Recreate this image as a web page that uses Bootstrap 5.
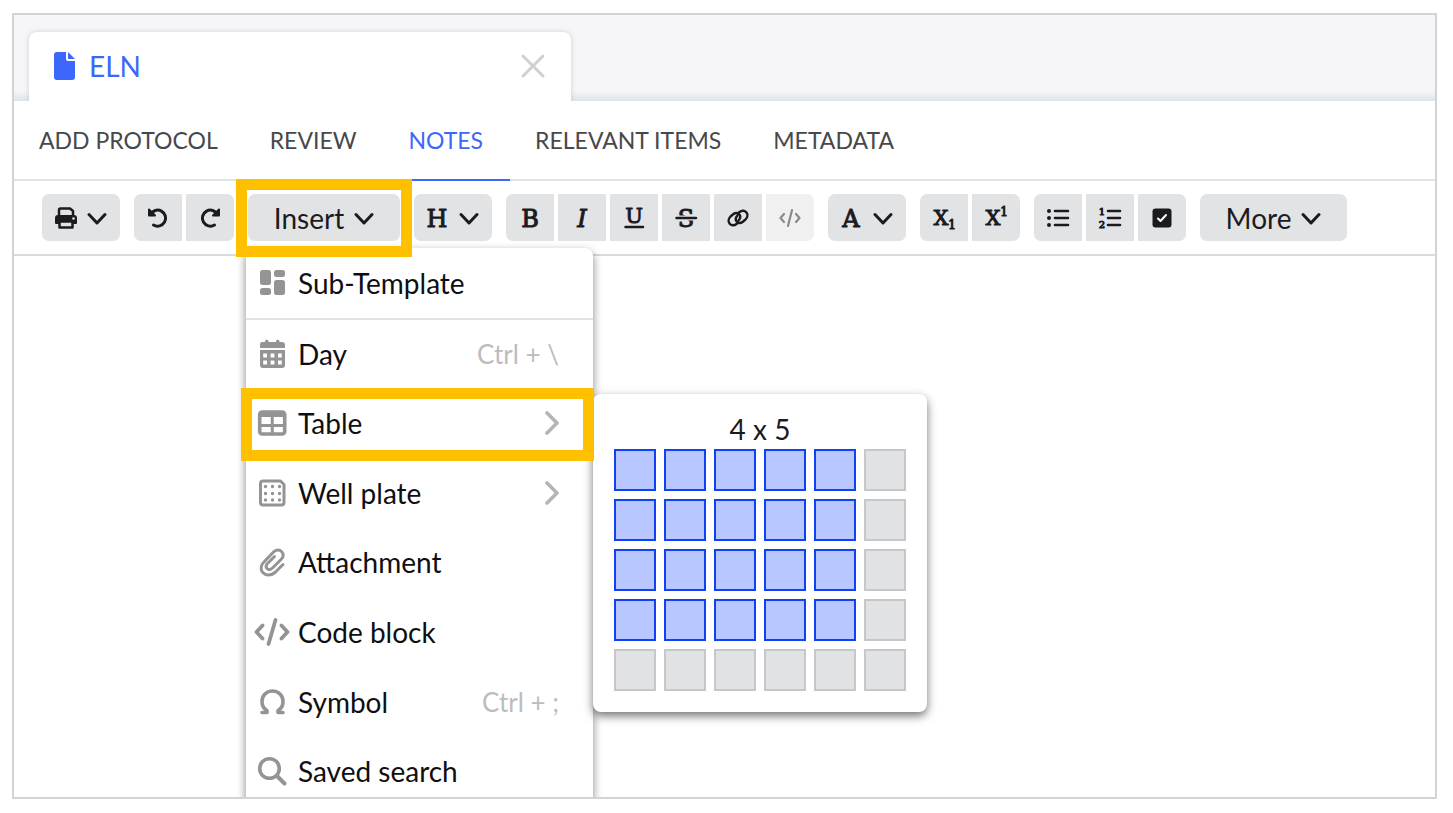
<!DOCTYPE html>
<html lang="en">
<head>
<meta charset="utf-8">
<meta name="viewport" content="width=device-width, initial-scale=1">
<title>ELN</title>
<link href="https://cdn.jsdelivr.net/npm/bootstrap@5.3.0/dist/css/bootstrap.min.css" rel="stylesheet">
<style>
  :root { --ink: #1b1b1f; --accent: #3d66fb; --mark: #ffc000; --key: #e2e3e5; }
  body { font-family: Lato, "Liberation Sans", sans-serif; color: var(--ink); background: #fff; }
  .app-frame { height: calc(100vh - 27px); margin: 13px 16px 14px 12px; border: 2px solid #d3d3d4; }
  .tab-strip { background: linear-gradient(#f6f6f9 0 88%, #dde4ea); padding: 17px 15px 0; height: 86px; }
  .doc-tab { width: 542px; padding: 0 25px 2px 24px; background: #fff; border-radius: 8px 8px 0 0; color: var(--accent); font-size: 28px; line-height: 40px; box-shadow: 0 0 5px rgba(60,60,70,.2); clip-path: inset(-8px -8px 0 -8px); }
  .doc-close, .doc-close:hover { color: #d0d0d2; }
  .view-nav { border-bottom: 2px solid #e1e2e4; }
  .view-nav .nav-link { padding: 19px 27px 19px 25px; font-size: 23px; line-height: 40px; color: #48484a; margin-bottom: -2px; border-bottom: 2px solid transparent; }
  .view-nav .nav-link.active { color: var(--accent); border-color: var(--accent); }
  .tool-row { gap: 14px; padding: 13px 28px; border-bottom: 2px solid #d9dbdf; }
  .tool-set { gap: 4px; }
  .tool { width: 48px; height: 47px; padding: 0; border: 0; border-radius: 0; background: var(--key); color: var(--ink); display: flex; align-items: center; justify-content: center; gap: 10px; font-size: 28px; line-height: 40px; }
  .tool:disabled { background: #f0f0f1; color: #8a8a8c; opacity: 1; }
  .tool-set > .tool:first-child { border-top-left-radius: 7px; border-bottom-left-radius: 7px; }
  .tool-set > .tool:last-of-type { border-top-right-radius: 7px; border-bottom-right-radius: 7px; }
  .tool-pick { width: 78px; }
  .tool-insert { width: 152px; }
  .tool-more { width: 147px; }
  svg { flex: none; fill: none; stroke: currentColor; stroke-width: 3; stroke-linecap: round; stroke-linejoin: round; overflow: visible; }
  svg text { font-family: "DejaVu Serif", serif; font-size: 24px; fill: currentColor; stroke-width: 1; text-anchor: middle; }
  svg .letter-x { font-size: 21px; }
  svg .letter-u { font-size: 21px; }
  svg .script-digit { font-size: 12px; }
  svg .list-digit { font-size: 10px; }
  .marked::after { content: ""; position: absolute; border: 11px solid var(--mark); pointer-events: none; z-index: 30; }
  .insert-box::after { inset: -15px -12px -16px; }
  .insert-menu { position: absolute; z-index: 10; top: 54px; left: -2px; width: 347px; background: #fff; border-radius: 8px; font-size: 28px; line-height: 40px; box-shadow: 0 4px 8px 1px rgba(0,0,0,.4); }
  .entry { width: 100%; height: 100%; border: 0; background: none; color: #0f0f12; padding: 0 34px 2px 8px; display: flex; align-items: center; gap: 8px; text-align: left; }
  .entry svg { color: #949496; }
  .entry-end { margin-left: auto; color: #bcbcbe; font-size: 26px; }
  .entry svg.entry-end { color: #b4b4b6; }
  .entry-first { height: 72px; border-bottom: 2px solid #e1e2e4; }
  .entry-first .entry { padding-bottom: 0; }
  .entry-grid { display: grid; grid-auto-rows: 1fr; height: 487px; }
  .table-row-item::after { inset: -2px -1px -2px -5px; }
  .size-panel { position: absolute; z-index: 20; top: 4px; left: 100%; padding: 15px 21px 21px; background: #fff; border-radius: 8px; box-shadow: 0 4px 10px rgba(0,0,0,.55); text-align: center; }
  .size-grid { display: grid; grid-template-columns: repeat(6, 42px); gap: 8px; }
  .cell { width: 42px; height: 42px; padding: 0; background: #e1e2e4; border: 2px solid #c6c7ca; }
  .cell.on { background: #b8c7ff; border-color: #0f42f5; }
</style>
</head>
<body>
<svg width="0" height="0" class="position-absolute" aria-hidden="true">
  <symbol id="chev" viewBox="0 0 20 14"><path d="M2 3.500 10 12 18 3.500"/></symbol>
  <symbol id="next" viewBox="0 0 16 26"><path stroke-width="3.600" d="M4 3 14 13 4 23"/></symbol>
</svg>
<main class="app-frame overflow-hidden">
  <div class="tab-strip d-flex">
    <div class="doc-tab d-flex align-items-center">
      <svg width="24" height="30" viewBox="0 0 24 30" aria-hidden="true"><path fill="currentColor" stroke="none" d="M4 1H13V8Q13 10 15 10H22V26Q22 29 19 29H4Q1 29 1 26V4Q1 1 4 1Z"/><path fill="currentColor" stroke="none" d="M15 1 22 8H15Z"/></svg>
      <span class="ms-2 ps-1">ELN</span>
      <button type="button" class="btn doc-close p-0 border-0 ms-auto d-flex" aria-label="Close tab"><svg width="26" height="26" viewBox="0 0 26 26"><path d="M3 3 23 23M23 3 3 23"/></svg></button>
    </div>
  </div>
  <nav class="view-nav nav flex-nowrap text-nowrap">
    <a class="nav-link" href="#protocol">ADD PROTOCOL</a>
    <a class="nav-link" href="#review">REVIEW</a>
    <a class="nav-link active" href="#notes" aria-current="page">NOTES</a>
    <a class="nav-link" href="#items">RELEVANT ITEMS</a>
    <a class="nav-link" href="#metadata">METADATA</a>
  </nav>
  <div class="tool-row d-flex" role="toolbar" aria-label="Editor tools">
    <div class="tool-set d-flex">
      <button type="button" class="btn tool tool-pick" aria-label="Print">
        <svg width="22" height="22" viewBox="0 0 22 22"><path stroke-width="2.500" d="M4 8V3Q4 1.500 5.500 1.500H15L18 4V8"/><path fill="currentColor" stroke="none" d="M3 8H19Q22 8 22 11V16Q22 17 21 17H1Q0 17 0 16V11Q0 8 3 8Z"/><path fill="#e2e3e5" stroke-width="2.500" d="M4.500 14.500H17.500V20.500H4.500Z"/><circle cx="18.500" cy="11.500" r="1.300" fill="#e2e3e5" stroke="none"/></svg>
        <svg width="20" height="14"><use href="#chev"/></svg>
      </button>
    </div>
    <div class="tool-set d-flex">
      <button type="button" class="btn tool" aria-label="Undo"><svg width="22" height="22" viewBox="0 0 22 22"><path d="M3.500 7.500A8 8 0 1 1 6.500 18"/><path fill="currentColor" stroke-width="2" d="M2 2.500V8.500H8Z"/></svg></button>
      <button type="button" class="btn tool" aria-label="Redo"><svg width="22" height="22" viewBox="0 0 22 22"><path d="M18.500 7.500A8 8 0 1 0 15.500 18"/><path fill="currentColor" stroke-width="2" d="M20 2.500V8.500H14Z"/></svg></button>
    </div>
    <div class="tool-set d-flex position-relative marked insert-box">
      <button type="button" class="btn tool tool-insert" aria-haspopup="true" aria-expanded="true">Insert <svg width="20" height="14"><use href="#chev"/></svg></button>
      <div class="insert-menu">
        <div class="entry-first">
          <button type="button" class="entry"><svg width="36" height="30" viewBox="0 0 36 30"><g fill="currentColor" stroke="none"><rect x="6" y="2" width="11" height="15" rx="2.500"/><rect x="20" y="2" width="11" height="7" rx="2.500"/><rect x="6" y="20" width="11" height="7" rx="2.500"/><rect x="20" y="12" width="11" height="15" rx="2.500"/></g></svg>Sub-Template</button>
        </div>
        <ul class="entry-grid list-unstyled m-0">
          <li><button type="button" class="entry"><svg width="36" height="30" viewBox="0 0 36 30"><path fill="currentColor" stroke="none" d="M8 3H11V2Q12.800-1 14.500 2V3H22V2Q23.500-1 25.500 2V3H28Q31 3 31 6V9H6V6Q6 3 8 3ZM6 11H31V26Q31 29 28 29H9Q6 29 6 26Z"/><path stroke="#fff" stroke-width="3.800" stroke-linecap="butt" stroke-dasharray="3.800 3.600" d="M9.200 16.500H27.800M9.200 23.500H27.800"/></svg>Day<span class="entry-end">Ctrl + \</span></button></li>
          <li class="position-relative marked table-row-item"><button type="button" class="entry" aria-haspopup="true" aria-expanded="true"><svg width="36" height="30" viewBox="0 0 36 30"><rect x="5.700" y="4" width="25" height="22" rx="2.500" stroke-width="3.600"/><path fill="currentColor" d="M6 5H30V7.500H6ZM18.250 8V26M6 17.500H30"/></svg>Table<svg class="entry-end" width="16" height="26"><use href="#next"/></svg></button>
            <div class="size-panel">
              <div>4 x 5</div>
              <div class="size-grid" id="sizeGrid"></div>
            </div>
          </li>
          <li><button type="button" class="entry"><svg width="36" height="30" viewBox="0 0 36 30"><path d="M9 3H26.500L30 6.500V24.500Q30 27 27.500 27H9Q6.500 27 6.500 24.500V5.500Q6.500 3 9 3Z"/><path stroke-width="3.400" stroke-dasharray="0 7" d="M11.500 8.500H26M11.500 15.500H26M11.500 22H26"/></svg>Well plate<svg class="entry-end" width="16" height="26"><use href="#next"/></svg></button></li>
          <li><button type="button" class="entry"><svg width="36" height="30" viewBox="0 0 36 30"><path d="M29 17.500 21 25.500C17 29 11.500 28.500 8.800 25.500C6 22.500 7 18 9.500 15.500L19.500 5C22 2.500 25.500 2.500 27.500 4.500C30 7 29.500 10 27.500 12L18.500 21C16.500 23 14.500 23 13 21.500C11.500 20 12 18 13.500 16.500L20.500 9.500"/></svg>Attachment</button></li>
          <li><button type="button" class="entry"><svg width="36" height="30" viewBox="0 0 36 30"><path stroke-width="3.800" d="M8.500 8.500 2.500 15 8.500 21.500M27.500 8.500 33.500 15 27.500 21.500M21.500 3 14.500 27"/></svg>Code block</button></li>
          <li><button type="button" class="entry"><svg width="36" height="30" viewBox="0 0 36 30"><path stroke-width="3.600" d="M8 25.500H13V23.500C9.500 21.500 8 18.500 8 14.500C8 8.500 12.500 4 18.500 4S29 8.500 29 14.500C29 18.500 27.500 21.500 24 23.500V25.500H29"/></svg>Symbol<span class="entry-end">Ctrl + ;</span></button></li>
          <li><button type="button" class="entry"><svg width="36" height="30" viewBox="0 0 36 30"><circle cx="15.500" cy="12.500" r="9.800" stroke-width="3.600"/><path stroke-width="4" d="M23 20 30.500 27.500"/></svg>Saved search</button></li>
        </ul>
      </div>
    </div>
    <div class="tool-set d-flex">
      <button type="button" class="btn tool tool-pick" aria-label="Heading"><svg width="22" height="22" viewBox="0 0 22 22"><text x="10" y="20">H</text></svg><svg width="20" height="14"><use href="#chev"/></svg></button>
    </div>
    <div class="tool-set d-flex">
      <button type="button" class="btn tool" aria-label="Bold"><svg width="22" height="22" viewBox="0 0 22 22"><text x="11" y="20">B</text></svg></button>
      <button type="button" class="btn tool" aria-label="Italic"><svg width="22" height="22" viewBox="0 0 22 22"><text x="11" y="20" font-style="italic">I</text></svg></button>
      <button type="button" class="btn tool" aria-label="Underline"><svg width="22" height="22" viewBox="0 0 22 22"><text class="letter-u" x="11" y="16">U</text><path stroke-width="2.500" d="M2.500 20H20"/></svg></button>
      <button type="button" class="btn tool" aria-label="Strikethrough"><svg width="22" height="22" viewBox="0 0 22 22"><text x="11" y="20">S</text><path stroke="#e2e3e5" stroke-width="5" stroke-linecap="butt" d="M1 11H21"/><path stroke-width="2.500" d="M1.500 11H21"/></svg></button>
      <button type="button" class="btn tool" aria-label="Link"><svg width="22" height="22" viewBox="0 0 22 22"><g stroke-width="2.400"><path d="M11.500 15.500 9.500 17C7 19 4 18.500 2.500 16.500S1.500 11.500 3.500 9.500L6.500 7C9 5 12 6 13 8.500S12.500 12.500 11.500 13.500"/><path d="M10.500 6.500 12.500 5C15 3 18 3.500 19.500 5.500S20.500 10.500 18.500 12.500L15.500 15C13 17 10 16 9 13.500S9.500 9.500 10.500 8.500"/></g></svg></button>
      <button type="button" class="btn tool" aria-label="Code" disabled><svg width="22" height="22" viewBox="0 0 22 22"><path stroke-width="2.200" d="M5 7 1.500 11 5 15M17 7 20.500 11 17 15M13 3 9 19"/></svg></button>
    </div>
    <div class="tool-set d-flex">
      <button type="button" class="btn tool tool-pick" aria-label="Text colour"><svg width="22" height="22" viewBox="0 0 22 22"><text x="10" y="20">A</text></svg><svg width="20" height="14"><use href="#chev"/></svg></button>
    </div>
    <div class="tool-set d-flex">
      <button type="button" class="btn tool" aria-label="Subscript"><svg width="22" height="22" viewBox="0 0 22 22"><text class="letter-x" x="8" y="18">X</text><text class="script-digit" x="19" y="22">1</text></svg></button>
      <button type="button" class="btn tool" aria-label="Superscript"><svg width="22" height="22" viewBox="0 0 22 22"><text class="letter-x" x="8" y="18">X</text><text class="script-digit" x="19" y="9">1</text></svg></button>
    </div>
    <div class="tool-set d-flex">
      <button type="button" class="btn tool" aria-label="Bulleted list"><svg width="22" height="22" viewBox="0 0 22 22"><path stroke-width="2.600" d="M8 4H21M8 11H21M8 18H21"/><path stroke-width="4" d="M2 4H2M2 11H2M2 18H2"/></svg></button>
      <button type="button" class="btn tool" aria-label="Numbered list"><svg width="22" height="22" viewBox="0 0 22 22"><path stroke-width="2.600" d="M9 4H21M9 11H21M9 18H21"/><text class="list-digit" x="3" y="8">1</text><text class="list-digit" x="3" y="21">2</text></svg></button>
      <button type="button" class="btn tool" aria-label="Checklist"><svg width="22" height="22" viewBox="0 0 22 22"><rect x="1.500" y="1.500" width="19" height="19" rx="3" fill="currentColor" stroke="none"/><path stroke="#fff" stroke-width="2" d="M7 11.500 9.500 14 15 8"/></svg></button>
    </div>
    <div class="tool-set d-flex">
      <button type="button" class="btn tool tool-more">More <svg width="20" height="14"><use href="#chev"/></svg></button>
    </div>
  </div>
</main>
<script src="https://cdn.jsdelivr.net/npm/bootstrap@5.3.0/dist/js/bootstrap.bundle.min.js"></script>
<script>
  const sizeGrid = document.getElementById('sizeGrid');
  for (let r = 1; r <= 5; r++) {
    for (let c = 1; c <= 6; c++) {
      const cell = document.createElement('button');
      cell.type = 'button';
      cell.className = r <= 4 && c <= 5 ? 'cell on' : 'cell';
      cell.setAttribute('aria-label', r + ' by ' + c);
      sizeGrid.append(cell);
    }
  }
</script>
</body>
</html>
